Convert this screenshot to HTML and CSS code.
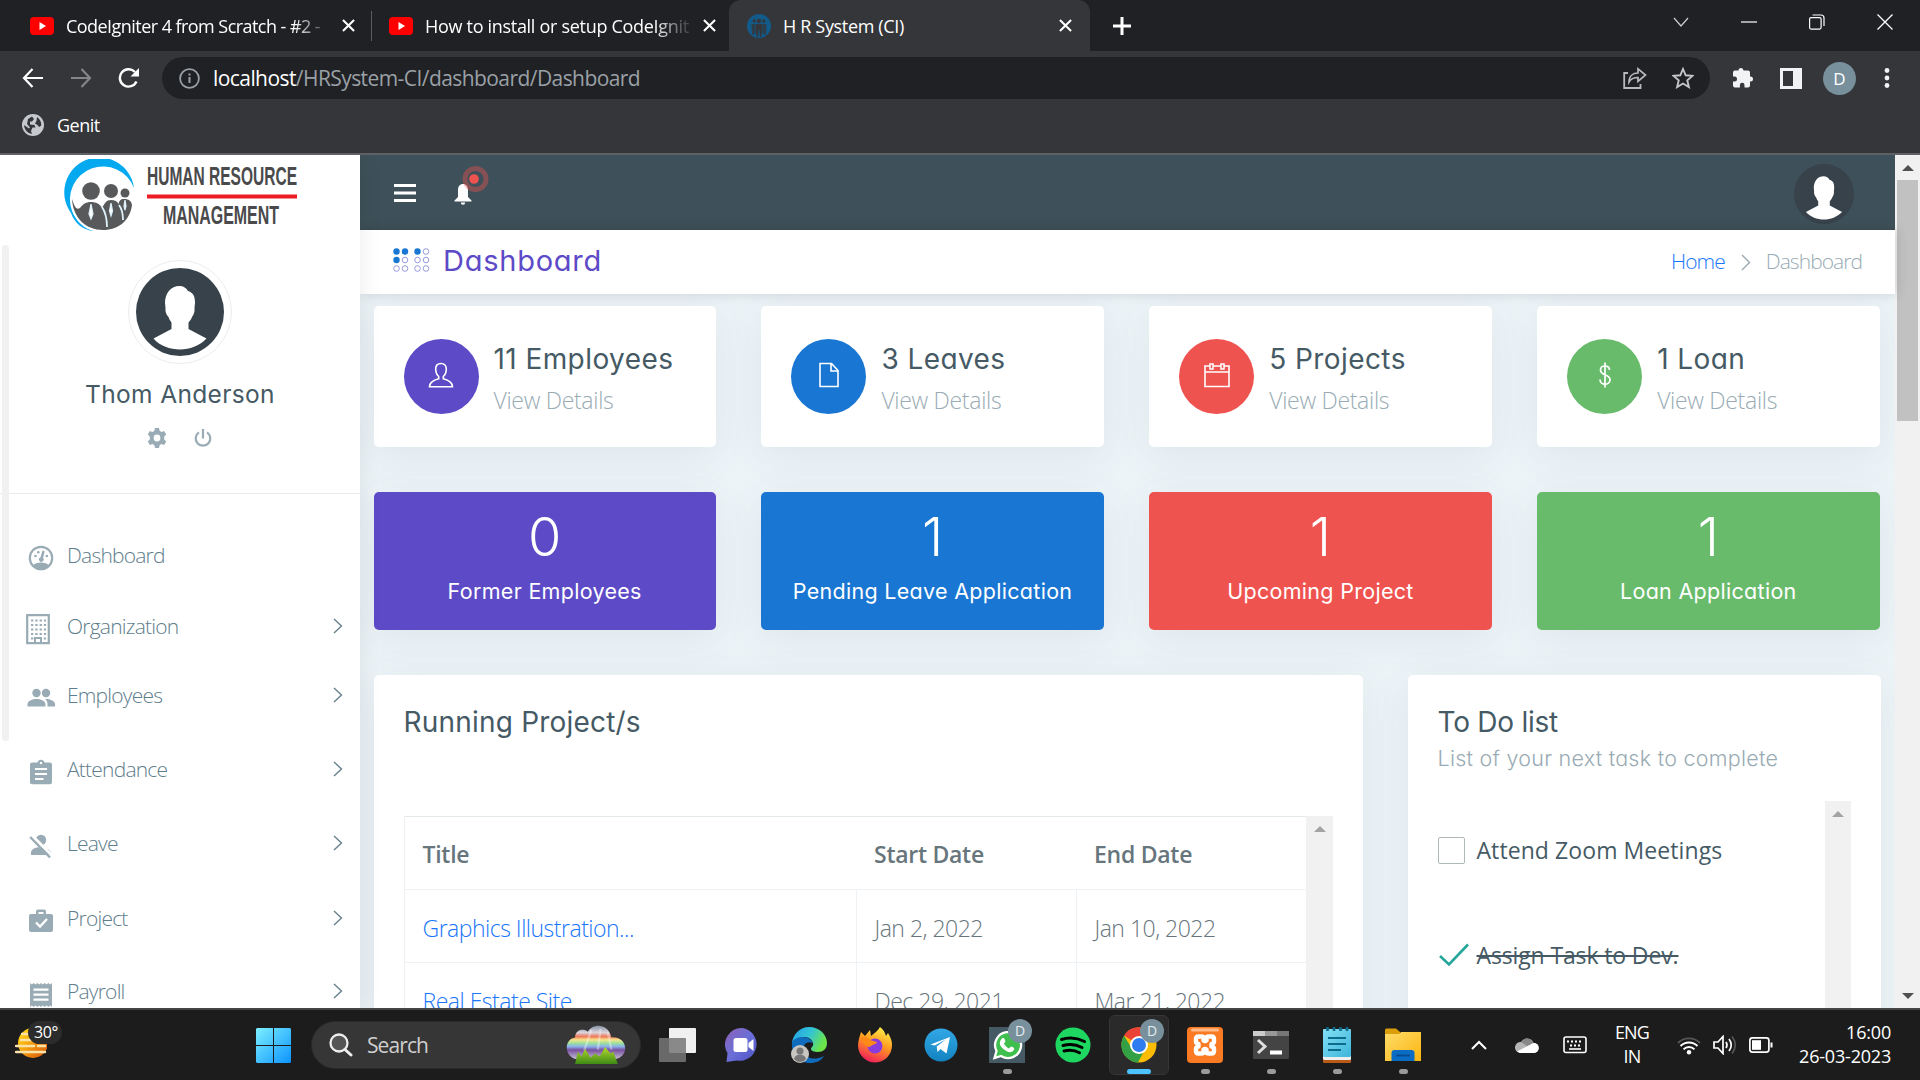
FILE: index.html
```
<!DOCTYPE html>
<html lang="en">
<head>
<meta charset="utf-8">
<title>H R System (CI)</title>
<link rel="stylesheet" href="styles.css">
</head>
<body>
<svg width="0" height="0" class="defs">
  <defs>
    <linearGradient id="win" x1="0" y1="0" x2="1" y2="1"><stop offset="0" stop-color="#7cf0ff"/><stop offset="1" stop-color="#0c93ff"/></linearGradient>
    <linearGradient id="sun" x1="0" y1="0" x2="1" y2="1"><stop offset="0.2" stop-color="#ffc912"/><stop offset="1" stop-color="#d94f0a"/></linearGradient>
    <linearGradient id="rainbow" x1="0" y1="0" x2="0" y2="1"><stop offset="0" stop-color="#8793a6"/><stop offset=".2" stop-color="#d9d3dc"/><stop offset=".32" stop-color="#ee7a5c"/><stop offset=".42" stop-color="#f6e58a"/><stop offset=".52" stop-color="#9be09a"/><stop offset=".62" stop-color="#8ab0ec"/><stop offset=".72" stop-color="#7a4f9e"/><stop offset="1" stop-color="#c3bfd4"/></linearGradient>
    <linearGradient id="grass" x1="0" y1="0" x2="0" y2="1"><stop offset="0" stop-color="#b5d92c"/><stop offset="1" stop-color="#3d8a16"/></linearGradient>
    <linearGradient id="chat" x1="0" y1="0" x2="1" y2="1"><stop offset="0" stop-color="#8d62b4"/><stop offset=".5" stop-color="#6a6fd8"/><stop offset="1" stop-color="#4f52c4"/></linearGradient>
    <linearGradient id="edge" x1="0" y1="0" x2="1" y2=".4"><stop offset="0" stop-color="#1f9fe8"/><stop offset=".55" stop-color="#35c5d4"/><stop offset="1" stop-color="#6be548"/></linearGradient>
    <linearGradient id="fox" x1=".7" y1="0" x2=".3" y2="1"><stop offset="0" stop-color="#fff04a"/><stop offset=".45" stop-color="#ff9a1f"/><stop offset="1" stop-color="#f0195e"/></linearGradient>
    <linearGradient id="tele" x1="0" y1="0" x2="0" y2="1"><stop offset="0" stop-color="#33a8e6"/><stop offset="1" stop-color="#1283c0"/></linearGradient>
    <linearGradient id="folder" x1="0" y1="0" x2="1" y2="1"><stop offset="0" stop-color="#ffdc6b"/><stop offset="1" stop-color="#fbb50e"/></linearGradient>
    <linearGradient id="note" x1="0" y1="0" x2="1" y2="1"><stop offset="0" stop-color="#83e0f5"/><stop offset="1" stop-color="#3db5da"/></linearGradient>
    <symbol id="i-yt" viewBox="0 0 24 18"><rect width="24" height="18" rx="4" fill="#f00"/><path d="M9.500 5v8l6.500-4z" fill="#fff"/></symbol>
    <symbol id="i-x" viewBox="0 0 14 14"><path d="M1 1l12 12M13 1L1 13" stroke="#fff" stroke-width="2.200" fill="none"/></symbol>
    <symbol id="i-chev" viewBox="0 0 10 16"><path d="M1 1l7.500 7L1 15" stroke="#67808c" stroke-width="1.400" fill="none"/></symbol>
    <symbol id="i-person" viewBox="0 0 88 88"><circle cx="44" cy="44" r="44" fill="#37424a"/><path d="M43.500 18c4 0 7 2 8.500 5 6 2 7 6 7 12l-.5 5c.5 4-1 7-2.500 9-1 3-2.500 4-3.500 5.500V61l18 9.500C63 78 54 81.500 44 81.500S24 78 17.500 70.500l18-9.500v-6.500c-1-1.500-2-2.500-3-5.500-2-2-3.500-5-3-9l-.5-5c0-10 6-17 14.500-17z" fill="#fff"/></symbol>
  </defs>
</svg>

<div class="tabs">
  <div class="tab tab-a"><svg class="fav yt" ><use href="#i-yt"/></svg><span class="tab-title fade">CodeIgniter 4 from Scratch - #2 -</span><svg width="13" height="13"><use href="#i-x"/></svg></div>
  <i class="tab-sep"></i>
  <div class="tab tab-b"><svg class="fav yt"><use href="#i-yt"/></svg><span class="tab-title fade">How to install or setup CodeIgnit</span><svg width="13" height="13"><use href="#i-x"/></svg></div>
  <div class="tab tab-c"><svg class="fav" width="24" height="24" viewBox="0 0 24 24"><circle cx="12" cy="12" r="12" fill="#125a8a"/><g fill="#35363a"><circle cx="12" cy="7" r="2.200"/><circle cx="7.300" cy="7" r="1.700"/><circle cx="16.700" cy="7" r="1.700"/><path d="M8.500 10h7v8l-1.500 5h-1.200l-.4-7h-.8l-.4 7H10l-1.500-5z"/><path d="M4.500 10H8v9l-1 2-2-1zM19.500 10H16v9l1 2 2-1z" opacity=".8"/></g></svg><span class="tab-title">H R System (CI)</span><svg width="13" height="13"><use href="#i-x"/></svg></div>
  <svg class="plus" width="18" height="18" viewBox="0 0 18 18"><path d="M9 0v18M0 9h18" stroke="#fff" stroke-width="3"/></svg>
  <div class="winctl">
    <svg width="16" height="16" viewBox="0 0 16 16"><path d="M1 4l7 8 7-8" stroke="#ccc" fill="none" stroke-width="1.200"/></svg>
    <svg width="16" height="16" viewBox="0 0 16 16"><path d="M0 8h16" stroke="#fff" stroke-width="1.200"/></svg>
    <svg width="16" height="16" viewBox="0 0 16 16"><rect x=".6" y="3.600" width="11.500" height="11.500" rx="1.500" fill="none" stroke="#fff" stroke-width="1.200"/><path d="M3.500 1h8.500q3 0 3 3v8" fill="none" stroke="#fff" stroke-width="1.200"/></svg>
    <svg width="16" height="16" viewBox="0 0 16 16"><path d="M.5.5l15 15M15.500.5l-15 15" stroke="#fff" stroke-width="1.300"/></svg>
  </div>
</div>

<div class="toolbar">
  <svg width="22" height="20" viewBox="0 0 22 20"><path d="M21 10H2M10.500 1L2 10l8.500 9" stroke="#fff" stroke-width="2.200" fill="none"/></svg>
  <svg width="22" height="20" viewBox="0 0 22 20"><path d="M1 10h19M11.500 1L20 10l-8.500 9" stroke="#85868a" stroke-width="2.200" fill="none"/></svg>
  <svg width="22" height="20" viewBox="0 0 22 20"><path d="M18.500 13.500A8.700 8.700 0 1 1 17 4" stroke="#fff" stroke-width="2.400" fill="none"/><path d="M21 0v8.500h-8.500z" fill="#fff"/></svg>
  <div class="omni">
    <svg width="21" height="21" viewBox="0 0 21 21"><circle cx="10.500" cy="10.500" r="9.400" fill="none" stroke="#9aa0a6" stroke-width="1.800"/><path d="M10.500 9v6M10.500 5.500v2" stroke="#9aa0a6" stroke-width="2"/></svg>
    <span class="url"><b>localhost</b>/HRSystem-CI/dashboard/Dashboard</span>
    <svg class="share" width="24" height="22" viewBox="0 0 24 22"><path d="M5 6H1.200v15H17.500v-4" fill="none" stroke="#b8babd" stroke-width="1.800"/><path d="M6 15c0-6 4-9 9-9V1.800L22.500 8 15 14.500v-4c-4 0-7 1-9 4.500z" fill="none" stroke="#b8babd" stroke-width="1.700"/></svg>
    <svg width="22" height="22" viewBox="0 0 22 22"><path d="M11 2l2.700 6.300 6.800.6-5.200 4.500 1.600 6.700L11 16.500l-5.900 3.600 1.600-6.700L1.500 8.900l6.800-.6z" fill="none" stroke="#c4c6c8" stroke-width="1.900"/></svg>
  </div>
  <svg class="ext" width="22" height="24" viewBox="0 0 22 24"><path d="M6.500 4.500a2.500 2.500 0 0 1 5 0H16a2 2 0 0 1 2 2v4h.5a2.500 2.500 0 0 1 0 5H18v4a2 2 0 0 1-2 2h-3.500V19a2.300 2.300 0 0 0-4.600 0v2.500H3a2 2 0 0 1-2-2v-4h1.500a2.300 2.300 0 0 0 0-5H1v-4a2 2 0 0 1 2-2z" fill="#f1f3f4"/></svg>
  <svg width="22" height="21" viewBox="0 0 22 21"><rect width="22" height="21" fill="#f1f3f4"/><rect x="3" y="3" width="10" height="15" fill="#35363a"/></svg>
  <span class="me">D</span>
  <svg width="6" height="20" viewBox="0 0 6 20"><g fill="#f1f3f4"><circle cx="3" cy="2.500" r="2.400"/><circle cx="3" cy="10" r="2.400"/><circle cx="3" cy="17.500" r="2.400"/></g></svg>
</div>
<div class="bookmarks"><svg width="22" height="22" viewBox="0 0 22 22"><circle cx="11" cy="11" r="11" fill="#c6c9cd"/><path d="M10 2.500L12 5l-2 2.500H8v3l4.500.5 1 2.500h-3L9 17l1 3A9.200 9.200 0 0 1 2 11l5 3.500 1-1-3-3.500 1-5zM15 3c3 2 4.500 5 4.300 8.500L17 13l-1.500-2L13 9.500 14.500 7z" fill="#35363a"/></svg><span>Genit</span></div>

<div class="page">
  <aside class="side">
    <i class="track"></i>
    <svg class="logo" width="240" height="74" viewBox="0 0 240 74">
      <path d="M8 54A35 35 0 1 1 71 29 31.500 31.500 0 1 0 9 52c4 10 12 18 22 20C20 71 12 65 8 54z" fill="#05a9f0"/>
      <g fill="#58595b"><circle cx="28" cy="32" r="8.800"/><circle cx="48" cy="32" r="7"/><circle cx="62" cy="34" r="4.500"/><path d="M9 40c2 6 4 12 8 9 3-4 6-6 11-6s9 2 11 6c3-5 4-8 9-8 4 0 6 1 7.500 4 1.500-5 3-5 6-5 4 0 7 2 7.500 6-2 15-13 25-29 25-17 0-30-12-31-31z"/></g>
      <path d="M28 45l-2 10 2 5 2-5zM48 44l-1.500 8 1.500 5 1.500-5zM62 41l-1 6 1 4 1-4z" fill="#fff" stroke="#dff2fb" stroke-width="1.200"/><path d="M39 48c4 6 5 12 5 20M56 46c3 4 4 9 4 15" fill="none" stroke="#dff2fb" stroke-width="1.800"/>
      <g class="logo-text"><text x="84" y="26" textLength="150" lengthAdjust="spacingAndGlyphs">HUMAN RESOURCE</text><text x="100" y="65" textLength="116" lengthAdjust="spacingAndGlyphs">MANAGEMENT</text></g>
      <rect x="84" y="35.500" width="150" height="4" fill="#ed1c24"/>
    </svg>
    <div class="profile">
      <span class="ring"><svg width="88" height="88"><use href="#i-person"/></svg></span>
      <div class="name">Thom Anderson</div>
      <div class="acts">
        <svg width="20" height="20" viewBox="0 0 20 20"><path d="M8 0h4l.6 2.800 1.900 1.100L17.200 3l2 3.500L17.200 8.500v3l2 2-2 3.500-2.700-.9-1.900 1.100L12 20H8l-.6-2.800-1.900-1.100L2.800 17l-2-3.500 2-2v-3l-2-2L2.800 3l2.700.9 1.900-1.100zM10 6.600a3.400 3.400 0 1 0 0 6.800 3.400 3.400 0 0 0 0-6.800z" fill="#99abb4"/></svg>
        <svg width="18" height="18" viewBox="0 0 18 18"><path d="M5 3.300a7.300 7.300 0 1 0 8 0M9 0v9.500" fill="none" stroke="#99abb4" stroke-width="2.200"/></svg>
      </div>
    </div>
    <nav class="menu">
      <a class="m1"><svg viewBox="0 0 28 28"><circle cx="14" cy="14" r="11.200" fill="none" stroke="#99abb4" stroke-width="2.200"/><g fill="#99abb4"><path d="M5.500 21.500c4-4 13-4 17 0-4 5-13 5-17 0zM15.500 6.500l2.200.7-1.600 6.800a2.300 2.300 0 1 1-2.700-.6z"/><circle cx="8.500" cy="12" r="1.300"/><circle cx="11.300" cy="8.300" r="1.300"/><circle cx="19.800" cy="12" r="1.300"/></g></svg><span>Dashboard</span></a>
      <a class="m2"><svg class="bld" viewBox="0 0 28 32"><path d="M3.200 2.200h21.600v28H3.200z" fill="none" stroke="#99abb4" stroke-width="2.200"/><path d="M7 7.500h15M7 12h15M7 16.500h15M7 21h15" stroke="#99abb4" stroke-width="2.200" stroke-dasharray="2.300 2"/><path d="M7 25.500h2.300M19.800 25.500H22M11 25h6v5h-6z" stroke="#99abb4" stroke-width="2" fill="#fff"/></svg><span>Organization</span><svg class="chev"><use href="#i-chev"/></svg></a>
      <a class="m3"><svg viewBox="0 0 28 28"><g fill="#99abb4"><circle cx="9.500" cy="9" r="4.200"/><circle cx="19" cy="9" r="4.200"/><path d="M.5 22.500v-2.500c0-3 5-5 9-5s9 2 9 5v2.500zM19 15c4 0 9 2 9 5v2.500h-7.500V20c0-2-.8-3.500-2.500-4.900z"/></g></svg><span>Employees</span><svg class="chev"><use href="#i-chev"/></svg></a>
      <a class="m4"><svg viewBox="0 0 28 28"><path d="M5 4.500h5.500a3.600 3.600 0 0 1 7 0H23a2 2 0 0 1 2 2v17.700a2 2 0 0 1-2 2H5a2 2 0 0 1-2-2V6.500a2 2 0 0 1 2-2z" fill="#99abb4"/><path d="M8 11h12M8 16h12M8 21h8.500" stroke="#fff" stroke-width="2"/><circle cx="14" cy="5" r="1.200" fill="#fff"/></svg><span>Attendance</span><svg class="chev"><use href="#i-chev"/></svg></a>
      <a class="m5"><svg viewBox="0 0 28 28"><g fill="#99abb4"><circle cx="14" cy="8" r="5.200"/><path d="M4 23v-2.500c0-3.500 5-5.200 9-5.200s6 .7 8.500 2.200L24 20v3z"/></g><path d="M5 3.500l21 21" stroke="#fff" stroke-width="3"/><path d="M3.200 5L23 25.500" stroke="#99abb4" stroke-width="2.400"/></svg><span>Leave</span><svg class="chev"><use href="#i-chev"/></svg></a>
      <a class="m6"><svg viewBox="0 0 28 28"><path d="M4 7h5V4.500a2 2 0 0 1 2-2h6a2 2 0 0 1 2 2V7h5a2 2 0 0 1 2 2v14a2 2 0 0 1-2 2H4a2 2 0 0 1-2-2V9a2 2 0 0 1 2-2zm7.500 0h5V5h-5z" fill="#99abb4"/><path d="M9 15.500l4 4 7-7.500" stroke="#fff" stroke-width="2.300" fill="none"/></svg><span>Project</span><svg class="chev"><use href="#i-chev"/></svg></a>
      <a class="m7"><svg viewBox="0 0 28 28"><path d="M3 3l1.800 1.500L6.700 3l1.800 1.500L10.300 3l1.900 1.500L14 3l1.800 1.500L17.700 3l1.800 1.500L21.300 3l1.900 1.500L25 3v24l-1.800-1.500-1.900 1.500-1.800-1.500-1.800 1.500-1.900-1.500L14 27l-1.800-1.500-1.900 1.500-1.800-1.500L6.700 27l-1.900-1.500L3 27z" fill="#99abb4"/><path d="M6.500 9.700h15M6.500 14.700h15M6.500 19.700h15" stroke="#fff" stroke-width="2.200"/></svg><span>Payroll</span><svg class="chev"><use href="#i-chev"/></svg></a>
    </nav>
  </aside>

  <div class="content">
    <header class="top">
      <svg width="22" height="18" viewBox="0 0 22 18"><path d="M0 1.500h22M0 9h22M0 16.500h22" stroke="#fff" stroke-width="2.800"/></svg>
      <svg class="bell" width="50" height="48" viewBox="0 0 50 48"><path d="M14 20c3.200 0 5 2.500 5 6v7l3.500 3.500v1h-17v-1L9 33v-7c0-3.500 1.800-6 5-6zM11.800 38.500h4.400a2.200 2.200 0 0 1-4.400 0z" fill="#fff"/><circle cx="26.500" cy="15" r="10.500" fill="none" stroke="#ef5350" stroke-opacity=".4" stroke-width="5"/><circle cx="25" cy="15" r="4.800" fill="#ef5350"/></svg>
      <svg class="who" width="60" height="60"><use href="#i-person"/></svg>
    </header>
    <div class="title-bar">
      <svg width="37" height="24" viewBox="0 0 37 24"><g fill="#1976d2"><circle cx="3.500" cy="3.500" r="3.200"/><circle cx="12" cy="3.500" r="3.200"/><circle cx="24.500" cy="3.500" r="3.200"/><circle cx="3.500" cy="12" r="3.200"/></g><g fill="#fff" stroke="#8b8fd8" stroke-width=".9"><circle cx="33" cy="3.500" r="2.800"/><circle cx="12" cy="12" r="2.800"/><circle cx="24.500" cy="12" r="2.800"/><circle cx="33" cy="12" r="2.800"/><circle cx="3.500" cy="20.500" r="2.800"/><circle cx="12" cy="20.500" r="2.800"/><circle cx="24.500" cy="20.500" r="2.800"/><circle cx="33" cy="20.500" r="2.800"/></g></svg>
      <h1>Dashboard</h1>
      <div class="crumbs"><a>Home</a><svg width="10" height="17" viewBox="0 0 10 17"><path d="M1 1l7.500 7.500L1 16" stroke="#99a8b0" stroke-width="1.400" fill="none"/></svg><span>Dashboard</span></div>
    </div>
    <main class="board">
      <section class="stats">
        <article class="card stat"><i class="dot purple"><svg width="26" height="26" viewBox="0 0 26 26"><path d="M13 1.500c-3.500 0-5.300 2.500-5.300 5.500 0 3.500 1.300 6 3 7.500v2.300c-4.500 1.500-9.200 3-9.200 8h23c0-5-4.700-6.500-9.200-8v-2.300c1.700-1.500 3-4 3-7.500 0-3-1.800-5.500-5.300-5.500z" fill="none" stroke="#fff" stroke-width="1.600"/></svg></i><div><h2>11 Employees</h2><a>View Details</a></div></article>
        <article class="card stat"><i class="dot blue"><svg width="26" height="26" viewBox="0 0 26 26"><path d="M4 1.500h11.500l6.500 7v16H4zM15 1.500V9h7" fill="none" stroke="#fff" stroke-width="1.600"/></svg></i><div><h2>3 Leaves</h2><a>View Details</a></div></article>
        <article class="card stat"><i class="dot red"><svg width="26" height="26" viewBox="0 0 26 26"><path d="M1 4h24v20.500H1zM1 10h24" fill="none" stroke="#fff" stroke-width="1.600"/><path d="M6 2h3v5H6zM17 2h3v5h-3z" fill="#ef5350" stroke="#fff" stroke-width="1.500"/></svg></i><div><h2>5 Projects</h2><a>View Details</a></div></article>
        <article class="card stat"><i class="dot green"><svg width="26" height="26" viewBox="0 0 26 26"><path d="M13 .5v25M17.500 8c0-2.500-2-4-4.500-4S8.500 5.500 8.500 8s2 3.700 4.500 4.700 5 2.500 5 5-2.200 4.500-5 4.500-5-2-5-4.700" fill="none" stroke="#fff" stroke-width="1.700"/></svg></i><div><h2>1 Loan</h2><a>View Details</a></div></article>
      </section>
      <section class="stats counts">
        <article class="card purple"><strong>0</strong><span>Former Employees</span></article>
        <article class="card blue"><strong>1</strong><span>Pending Leave Application</span></article>
        <article class="card red"><strong>1</strong><span>Upcoming Project</span></article>
        <article class="card green"><strong>1</strong><span>Loan Application</span></article>
      </section>
      <section class="lower">
        <article class="card panel projects">
          <h2>Running Project/s</h2>
          <div class="scroller">
            <table>
              <thead><tr><th>Title</th><th>Start Date</th><th>End Date</th></tr></thead>
              <tbody>
                <tr><td><a>Graphics Illustration...</a></td><td>Jan 2, 2022</td><td>Jan 10, 2022</td></tr>
                <tr><td><a>Real Estate Site...</a></td><td>Dec 29, 2021</td><td>Mar 21, 2022</td></tr>
              </tbody>
            </table>
            <div class="gutter"><i class="up"></i></div>
          </div>
        </article>
        <article class="card panel todo">
          <h2>To Do list</h2>
          <p>List of your next task to complete</p>
          <div class="scroller">
            <ul>
              <li><i class="box"></i><span>Attend Zoom Meetings</span></li>
              <li class="done"><svg width="32" height="24" viewBox="0 0 32 24"><path d="M2 13l9 8.500L30 1.500" fill="none" stroke="#26a69a" stroke-width="2.600"/></svg><span>Assign Task to Dev.</span></li>
            </ul>
            <div class="gutter"><i class="up"></i></div>
          </div>
        </article>
      </section>
    </main>
  </div>
  <div class="scrollbar"><i class="up"></i><i class="thumb"></i><i class="down"></i></div>
</div>

<footer class="taskbar">
  <div class="weather"><svg width="32" height="32" viewBox="0 0 32 32"><circle cx="18" cy="16" r="15" fill="url(#sun)"/><path d="M7 7h8M6 13h13M1 19h18M23 19h7M1 25h29" stroke="#fbe3a8" stroke-width="2.400" stroke-linecap="round"/></svg><span>30°</span></div>
  <svg class="win" width="35" height="35" viewBox="0 0 35 35"><path d="M1 0h16v17H0V1zM18 0h16l1 1v16H18zM0 18h17v17H1l-1-1zM18 18h17v16l-1 1H18z" fill="url(#win)"/></svg>
  <div class="search"><svg width="24" height="24" viewBox="0 0 24 24"><circle cx="10" cy="10" r="8.500" fill="#555" stroke="#eee" stroke-width="2.300"/><path d="M16 16.500l6 5.500" stroke="#eee" stroke-width="3" stroke-linecap="round"/></svg><span>Search</span><svg class="art" width="60" height="40" viewBox="0 0 66 42" preserveAspectRatio="none"><path d="M12 36C-2 34-3 15 10 13c0-8 9-10 14-6 6-9 22-9 26 6 8-1 16 4 15 13-1 7-8 10-13 10z" fill="url(#rainbow)"/><path d="M28 5l-8 22M38 4l-3 22M46 8l4 18" stroke="#fff" stroke-width="2.500" opacity=".35"/><path d="M10 41l3-13 4 5 4-8 6 9 5-4 5 3 6-10 6 7 3-2 5 13z" fill="url(#grass)"/></svg></div>
  <div class="apps">
    <span><svg width="40" height="36" viewBox="0 0 40 36"><rect x="12" y="1" width="27" height="25" rx="1" fill="#f0f0f0"/><rect x="2" y="11" width="27" height="24" rx="1" fill="#777" opacity=".85"/></svg></span>
    <span><svg width="36" height="36" viewBox="0 0 36 36"><path d="M18 1a16.500 16.500 0 1 1-6 32.500L1.500 35l1-9A16.500 16.500 0 0 1 18 1z" fill="url(#chat)"/><rect x="8.500" y="11" width="14" height="14" rx="2.500" fill="#fff"/><path d="M23.500 16l5-4v12l-5-4z" fill="#fff"/></svg></span>
    <span><svg width="36" height="36" viewBox="0 0 36 36"><path d="M1 16C2 7 9 0 18 0c11 0 18 8 18 16 0 6-4 9-9 9-4 0-7-1-7-3s3-3 2-6c-1-4-5-6-9-6-5 0-9 2-12 6z" fill="url(#edge)"/><path d="M1 15c3-4 7-5 11-5 5 0 9 3 10 6-7-3-11 3-9 9s9 9 20 4c-3 5-8 7-14 7C7 36 0 27 1 15z" fill="#0f6cbd"/><circle cx="9" cy="27" r="9" fill="#c9c6c2"/><circle cx="9" cy="24" r="3.500" fill="#777"/><path d="M3 32c1-6 11-6 12 0-3 4-9 4-12 0z" fill="#777"/></svg></span>
    <span><svg width="36" height="36" viewBox="0 0 36 36"><path d="M23 0c4 3 5 6 6 9l2-3c3 5 4 8 4 12a17 17 0 0 1-34 1C1 13 3 9 4 5l4 4 5-6 1 6c3-3 7-5 9-9z" fill="url(#fox)"/><circle cx="18" cy="19" r="7.500" fill="#8a3bdc"/><path d="M4 10c4-1 7 0 9 3l7 2c-1 3-5 2-7 5-4 0-8-4-9-10z" fill="#ff8a17"/></svg></span>
    <span><svg width="34" height="34" viewBox="0 0 34 34"><circle cx="17" cy="17" r="16.500" fill="url(#tele)"/><path d="M6.500 16.500L26 9l-3.500 16.500-6-4.500-3 3-.8-5.500 9-7-11 6z" fill="#fff"/></svg></span>
    <span><svg width="36" height="36" viewBox="0 0 36 36"><rect width="36" height="36" fill="#455a64"/><path d="M5.500 31l2-7A13 13 0 1 1 12 29z" fill="#3fbf4e" stroke="#fff" stroke-width="2.300"/><path d="M13 11.500c2-1.500 3 1 3.500 3l-1.500 2c1 2.500 3 4 5 5l2-2c2 .5 4 1.500 3 3-2 4-6 3-10 0s-6-7-2-11z" fill="#fff"/></svg><em>D</em><u></u></span>
    <span><svg width="36" height="36" viewBox="0 0 36 36"><circle cx="18" cy="18" r="17.500" fill="#1ed760"/><path d="M6.500 12.500c8-2.500 16-1.500 23 2M8 18.500c7-2 13.500-1 19 2M9 24c6-1.500 11-.8 15.500 1.700" fill="none" stroke="#000" stroke-width="3" stroke-linecap="round"/></svg></span>
    <span class="active"><svg width="36" height="36" viewBox="0 0 36 36"><circle cx="18" cy="18" r="17.500" fill="#fbbc05"/><path d="M18 18L3 8.500A17.500 17.500 0 0 1 33.300 9.500H18z" fill="#ea4335"/><path d="M18 18l6 4-7 13.500A17.500 17.500 0 0 1 3 8.800l8 13z" fill="#34a046"/><circle cx="18" cy="18" r="9" fill="#fff"/><circle cx="18" cy="18" r="7" fill="#2f7cf0"/></svg><em>D</em><u class="on"></u></span>
    <span><svg width="36" height="36" viewBox="0 0 36 36"><rect width="36" height="36" rx="4" fill="#fb7a24"/><rect x="4" y="1.500" width="28" height="3" rx="1.500" fill="#fdb98a"/><path d="M11.500 9.500h3q2 0 2 2v2q1.500 1 3 0v-2q0-2 2-2h3q2.500 0 2.500 2.500v2.500q0 2-2.500 2.500v2.500q2.500.5 2.500 2.500v2q0 2.500-2.500 2.500h-3q-2 0-2-2v-2q-1.500-1-3 0v2q0 2-2 2h-3q-2.500 0-2.500-2.500v-2q0-2 2.500-2.500V17Q9 16.500 9 14.500V12q0-2.500 2.500-2.500z" fill="none" stroke="#fff" stroke-width="4.400" stroke-linejoin="round"/></svg><u></u></span>
    <span><svg width="36" height="28" viewBox="0 0 36 28"><rect width="36" height="28" rx="1.500" fill="#444"/><path d="M0 0h12v5H0z" fill="#ccc"/><path d="M12 0h12v5H12z" fill="#999"/><path d="M24 0h12v5H24z" fill="#777"/><path d="M5 9l7 6.500L5 22" fill="none" stroke="#ddd" stroke-width="3"/><path d="M17 21.500h12" stroke="#fff" stroke-width="4"/></svg><u></u></span>
    <span><svg width="28" height="36" viewBox="0 0 28 36"><rect y="30" width="28" height="6" rx="1" fill="#b95b17"/><rect y="2" width="28" height="31" rx="1.500" fill="#eee"/><rect y="2" width="28" height="28" rx="1.500" fill="url(#note)"/><path d="M5 11h18M5 17h18M5 23h13" stroke="#0b6c8c" stroke-width="2"/><path d="M4.500 0v4M11 0v4M17.500 0v4M24 0v4" stroke="#0f6b8a" stroke-width="2.600"/></svg><u></u></span>
    <span><svg width="36" height="34" viewBox="0 0 36 34"><path d="M0 2q0-1.500 1.500-1.500H11L15 4v6H0z" fill="#dc9d0a"/><path d="M0 6h14l2-2h20v29H0z" fill="url(#folder)"/><path d="M6.500 33V25q0-3 3-3h17q3 0 3 3v8z" fill="#0a6cc2"/><path d="M11 27.500h14" stroke="#064a91" stroke-width="1.800"/></svg><u></u></span>
  </div>
  <div class="tray">
    <svg width="16" height="10" viewBox="0 0 16 10"><path d="M1 9l7-7 7 7" fill="none" stroke="#fff" stroke-width="2"/></svg>
    <svg width="24" height="16" viewBox="0 0 24 16"><path d="M6 5a7 7 0 0 1 12.500 1A5 5 0 0 1 19 16H5A5.300 5.300 0 0 1 6 5z" fill="#b5b5b5"/><path d="M6 5a7 7 0 0 1 12.500 1L12 9z" fill="#888"/><path d="M2 14.500L18.500 6A5 5 0 0 1 19 16H5z" fill="#fff"/></svg>
    <svg width="24" height="18" viewBox="0 0 24 18"><rect x="1" y="1" width="22" height="15.500" rx="2" fill="none" stroke="#fff" stroke-width="1.600"/><path d="M4 5.500h16M7 9.500h12" stroke="#fff" stroke-width="2" stroke-dasharray="2 2"/><path d="M6 13h12" stroke="#fff" stroke-width="1.600"/></svg>
    <div class="lang">ENG<br>IN</div>
    <svg width="24" height="19" viewBox="0 0 24 19"><g fill="none" stroke-width="1.900"><path d="M1 7a15.500 15.500 0 0 1 22 0" stroke="#555"/><path d="M3.500 10a12 12 0 0 1 17 0M6.500 13.300a7.700 7.700 0 0 1 11 0" stroke="#fff"/></g><circle cx="12" cy="16.300" r="2.200" fill="#fff"/></svg>
    <svg width="24" height="20" viewBox="0 0 24 20"><path d="M1 7h4l5-5.500v17L5 13H1z" fill="none" stroke="#fff" stroke-width="1.700"/><path d="M13 7q2 3 0 6M16 4q4.500 6 0 12" fill="none" stroke="#fff" stroke-width="1.700"/><path d="M19 1.500q6.500 8.500 0 17" fill="none" stroke="#555" stroke-width="1.700"/></svg>
    <svg width="24" height="16" viewBox="0 0 24 16"><rect x=".9" y=".9" width="19" height="14.200" rx="2.500" fill="none" stroke="#fff" stroke-width="1.700"/><rect x="3" y="3.200" width="9" height="9.600" fill="#fff"/><path d="M21.500 5.500h2v5h-2z" fill="#fff"/></svg>
    <div class="clock">16:00<br>26-03-2023</div>
  </div>
</footer>
</body>
</html>
```
FILE: styles.css
```
:root { --ui: "Open Sans", "Noto Sans", sans-serif; --head: Inter, "Open Sans", sans-serif; --purple: #5c4ac7; --blue: #1976d2; --red: #ef5350; --green: #69bb6c; --muted: #99abb4; --dark: #455a64; }
* { box-sizing: border-box; }
body { margin: 0; width: 1920px; height: 1080px; overflow: hidden; font-family: var(--ui); display: flex; flex-direction: column; background: #1c1c1c; }
svg { display: block; flex: none; }
.defs { position: absolute; }
h1, h2, p, ul { margin: 0; padding: 0; font-weight: 400; }
i, em { font-style: normal; }

.tabs { height: 51px; flex: none; background: #202124; display: flex; align-items: center; color: #fff; font-size: 18px; letter-spacing: -.34px; }
.tab { display: flex; align-items: center; height: 51px; }
.tab-a { width: 371px; padding: 0 16px 0 30px; }
.tab-b { width: 357px; padding: 0 16px 0 17px; }
.tab-c { width: 361px; padding: 0 18px 0 18px; background: #35363a; border-radius: 12px 12px 0 0; }
.fav { margin-right: 12px; }
.yt { width: 24px; height: 18px; }
.tab-title { flex: 1; white-space: nowrap; line-height: 28px; margin-right: 14px; }
.tab-title.fade { letter-spacing: -.55px; -webkit-mask-image: linear-gradient(90deg, #000 87%, #0003 98%); mask-image: linear-gradient(90deg, #000 87%, #0003 98%); }
.tab-b .tab-title { letter-spacing: -.3px; }
.tab-sep { width: 1px; height: 30px; background: #5a5b5e; }
.plus { margin-left: 23px; }
.winctl { margin-left: auto; margin-right: 27px; padding-bottom: 8px; display: flex; gap: 52px; }

.toolbar { height: 54px; flex: none; background: #35363a; display: flex; align-items: center; padding: 0 30px 0 22px; }
.toolbar > svg { margin-right: 26px; }
.toolbar > svg:nth-child(3) { margin-right: 22px; }
.omni { width: 1548px; height: 42px; border-radius: 21px; background: #202124; display: flex; align-items: center; padding: 0 16px 0 17px; }
.url { flex: 1; margin-left: 13px; font-size: 21px; letter-spacing: -.57px; color: #9aa0a6; }
.url b { font-weight: 400; color: #fff; }
.share { margin-right: 25px; }
.toolbar > .ext { margin: 0 26px 0 22px; }
.toolbar > .ext + svg { margin-right: 21px; }
.me { width: 33px; height: 33px; border-radius: 50%; background: #78909c; color: #fff; font-size: 17px; line-height: 33px; text-align: center; margin-right: 28px; }
.toolbar > svg:last-child { margin-right: 0; }
.bookmarks { height: 50px; flex: none; background: #35363a; border-bottom: 2px solid #5f6164; display: flex; align-items: center; gap: 13px; padding: 0 22px 8px; color: #fff; font-size: 18px; letter-spacing: -.5px; }

.page { height: 853px; flex: none; display: flex; overflow: hidden; background: #fff; }
.side { width: 360px; flex: none; position: relative; z-index: 1; background: #fff; box-shadow: 1px 0 20px rgba(0,0,0,.08); }
.track { position: absolute; left: 2px; top: 90px; width: 7px; height: 496px; border-radius: 4px; background: #f1f1f1; }
.logo { margin: 4px 0 0 63px; }
.logo-text { font: bold 26px "Liberation Sans Narrow", "Liberation Sans", sans-serif; fill: #4a4a4c; }
.profile { height: 261px; padding-top: 27px; display: flex; flex-direction: column; align-items: center; border-bottom: 1px solid #e7ebed; }
.ring { width: 104px; height: 104px; border: 1px solid #ededed; border-radius: 50%; display: grid; place-items: center; }
.name { margin-top: 13px; font: 24.5px/34px var(--head); font-feature-settings: "cv11"; letter-spacing: .35px; color: var(--dark); }
.acts { display: flex; align-items: center; gap: 27px; margin: 17px 2px 0 0; }
.menu a { display: flex; align-items: center; padding: 0 17px 0 27px; color: #607d8b; font-size: 21px; font-weight: 300; letter-spacing: -.78px; }
.menu svg:first-child { width: 28px; height: 28px; margin-right: 12px; position: relative; top: 3px; }
.menu svg.bld { height: 32px; margin-left: -3px; margin-right: 15px; }
.menu span { flex: 1; }
.chev { width: 10px; height: 16px; }
.m1 { margin-top: 25px; height: 72px; } .m2 { height: 70px; } .m3 { height: 68px; } .m4 { height: 79px; } .m5 { height: 70px; } .m6 { height: 79px; } .m7 { height: 68px; }

.content { width: 1535px; display: flex; flex-direction: column; }
.top { height: 75px; flex: none; background: #3e5059; display: flex; align-items: center; padding: 0 41px 0 34px; }
.bell { margin: -10px 0 0 33px; }
.who { margin: 3px 0 0 auto; }
.title-bar { height: 64px; flex: none; background: #fff; display: flex; align-items: center; padding: 0 33px; box-shadow: 1px 0 12px rgba(0,0,0,.14); z-index: 0; }
.title-bar > svg { margin-bottom: 5px; }
h1, .board h2 { font: 28px/36px var(--head); font-feature-settings: "cv11"; letter-spacing: .2px; color: var(--dark); }
.title-bar h1 { color: var(--purple); margin-left: 13px; font-size: 29px; letter-spacing: .75px; padding-bottom: 2px; }
.crumbs { margin-left: auto; display: flex; align-items: center; gap: 15px; font-size: 21px; font-weight: 300; letter-spacing: -.95px; color: var(--muted); padding-bottom: 2px; }
.crumbs a, td a { color: #1a76fb; }
.crumbs svg { margin: 2px 0 0 1px; }

.board { flex: 1; background: #edf4f8; padding: 12px 15.500px 0 13.500px; display: flex; flex-direction: column; gap: 45px; min-height: 0; }
.stats { display: grid; grid-template-columns: repeat(4, 1fr); gap: 45.500px; }
.card { border-radius: 5px; background: #fff; box-shadow: 0 8px 40px rgba(69,90,100,.09); }
.stat { height: 141px; display: flex; align-items: center; padding: 0 30px; }
.dot { width: 75px; height: 75px; border-radius: 50%; display: grid; place-items: center; padding-bottom: 3px; }
.stat div { margin-left: 15px; }
.board .stat h2 { letter-spacing: .42px; line-height: 38px; white-space: nowrap; padding-top: 3px; }
.stat a { display: block; font-size: 23px; line-height: 32px; margin-top: 6px; font-weight: 300; letter-spacing: -.3px; color: var(--muted); }
.purple { background: var(--purple); } .blue { background: var(--blue); } .red { background: var(--red); } .green { background: var(--green); }
.counts .card { height: 138px; padding-top: 15px; text-align: center; color: #fff; font-family: var(--head); font-feature-settings: "cv11"; }
.counts strong { display: block; font-size: 54px; font-weight: 300; line-height: 60px; }
.counts span { display: block; margin-top: 9px; font-size: 21.500px; line-height: 30px; letter-spacing: .3px; white-space: nowrap; }
.lower { display: grid; grid-template-columns: 989px 1fr; gap: 45px; }
.panel { height: 420px; padding: 29px 30px; }
.scroller { display: flex; align-items: flex-start; }
.gutter { width: 26px; height: 320px; background: #f1f1f1; display: flex; justify-content: center; padding-top: 10px; }
.up { width: 0; height: 0; border: 6px solid transparent; border-top: 0; border-bottom: 6px solid #a3a3a3; }
.projects .scroller { margin-top: 76px; }
table { width: 903px; border-collapse: collapse; table-layout: fixed; font-size: 23px; color: #67757c; border-top: 1px solid #e4e9ec; }
tr { height: 73px; }
th, td { text-align: left; padding: 0 18px; font-weight: 300; letter-spacing: -.5px; white-space: nowrap; border: 1px solid #eff2f4; }
th { font-weight: 600; letter-spacing: -.27px; border-width: 0 0 1px; padding: 2px 18px 0; }
th:first-child { width: 452px; border-left: 1px solid #eff2f4; } th:nth-child(2) { width: 220px; } th:last-child { border-right: 1px solid #eff2f4; }
td { padding-top: 3px; }
.todo h2 { letter-spacing: -.25px; }
.todo p { margin-top: 3px; font: 300 21.500px/30px var(--head); font-feature-settings: "cv11"; letter-spacing: .26px; color: var(--muted); white-space: nowrap; }
.todo .scroller { margin-top: 28px; }
.todo ul { width: 387px; list-style: none; padding-top: 32px; }
.todo li { height: 34px; margin-bottom: 71px; display: flex; align-items: center; font-size: 23px; letter-spacing: .08px; color: var(--dark); }
.todo li svg { margin-right: 7px; }
.todo .done span { text-decoration: line-through; text-decoration-thickness: 2px; letter-spacing: -.13px; }
.box { width: 27px; height: 27px; border: 1px solid #b0b8b8; border-radius: 2px; margin-right: 12px; }
.scrollbar { width: 25px; background: #f1f1f1; display: flex; flex-direction: column; align-items: center; padding: 10px 0 9px; }
.scrollbar .up { border-bottom-color: #505050; }
.thumb { width: 21px; height: 241px; margin-top: 9px; background: #c1c1c1; }
.down { margin-top: auto; border: 6px solid transparent; border-bottom: 0; border-top-color: #505050; }

.taskbar { height: 72px; flex: none; background: #1c1c1c; border-top: 2px solid #454545; display: flex; align-items: center; color: #fff; }
.weather { width: 256px; padding-left: 15px; position: relative; bottom: 2px; }
.weather span { position: absolute; left: 28px; top: -6px; width: 34px; height: 23px; border-radius: 12px; background: #2c2c2c; font-size: 16px; line-height: 23px; text-align: center; padding-left: 2px; letter-spacing: -.3px; }
.search { width: 330px; height: 48px; margin-left: 20px; border-radius: 24px; background: #363636; border: 1px solid #2a2a2a; display: flex; align-items: center; padding: 0 14px 0 17px; color: #cfcfcf; font-size: 21px; letter-spacing: -.9px; }
.search span { flex: 1; margin-left: 14px; padding-bottom: 1px; }
.apps { display: flex; margin-left: 3px; }
.apps > span { width: 66px; height: 60px; display: grid; place-items: center; position: relative; }
.apps .active::before { content: ""; position: absolute; inset: 0 3px; border: 1px solid #363636; border-radius: 6px; background: #2a2a2a; }
.apps svg { position: relative; }
.apps u { position: absolute; left: 29px; bottom: 1px; width: 9px; height: 5px; border-radius: 3px; background: #9a9a9a; }
.apps .on { left: 21px; width: 24px; background: #4cc2ff; }
.apps em { position: absolute; left: 34px; top: 4px; width: 24px; height: 24px; border-radius: 50%; background: #78909c; font-size: 14px; line-height: 24px; text-align: center; color: #e6ebee; }
.tray { display: flex; align-items: center; margin-left: auto; padding-right: 29px; font-size: 18px; line-height: 24px; letter-spacing: -.2px; }
.tray svg:nth-child(1) { margin-right: 28px; }
.tray svg:nth-child(2) { margin-right: 24px; }
.lang { width: 36px; text-align: center; letter-spacing: -.8px; margin: 0 27px; padding-bottom: 2px; }
.lang + svg { margin-right: 12px; }
.lang + svg + svg { margin-right: 12px; }
.clock { width: 118px; text-align: right; padding-bottom: 2px; }
```
